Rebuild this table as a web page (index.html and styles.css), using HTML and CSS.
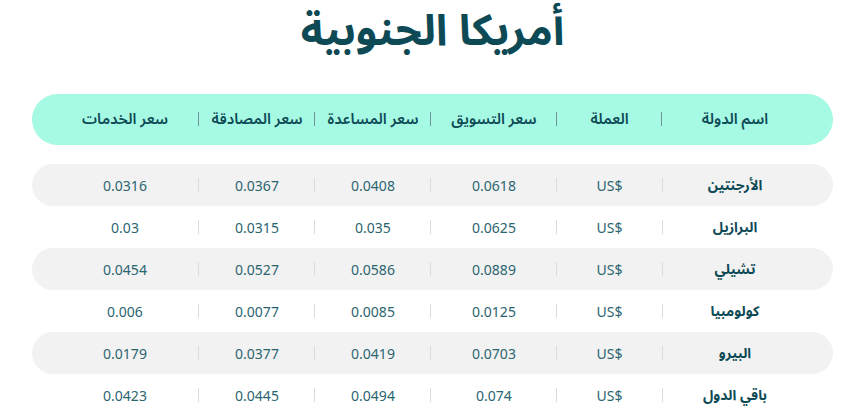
FILE: index.html
```html
<!DOCTYPE html>
<html lang="ar" dir="rtl">
<head>
  <meta charset="UTF-8" />
  <meta name="viewport" content="width=device-width, initial-scale=1.0" />
  <title>أمريكا الجنوبية</title>
  <link rel="stylesheet" href="styles.css">
</head>
<body>
<div class="container">
  <h1 class="title">أمريكا الجنوبية</h1>

  <div class="table">
    <div class="row head">
      <div class="cell">اسم الدولة</div>
      <div class="cell">العملة</div>
      <div class="cell">سعر التسويق</div>
      <div class="cell">سعر المساعدة</div>
      <div class="cell">سعر المصادقة</div>
      <div class="cell">سعر الخدمات</div>
    </div>

    <div class="row gray">
      <div class="cell name">الأرجنتين</div>
      <div class="cell cur">US$</div>
      <div class="cell">0.0618</div>
      <div class="cell">0.0408</div>
      <div class="cell">0.0367</div>
      <div class="cell">0.0316</div>
    </div>
    <div class="row">
      <div class="cell name">البرازيل</div>
      <div class="cell cur">US$</div>
      <div class="cell">0.0625</div>
      <div class="cell">0.035</div>
      <div class="cell">0.0315</div>
      <div class="cell">0.03</div>
    </div>
    <div class="row gray">
      <div class="cell name">تشيلي</div>
      <div class="cell cur">US$</div>
      <div class="cell">0.0889</div>
      <div class="cell">0.0586</div>
      <div class="cell">0.0527</div>
      <div class="cell">0.0454</div>
    </div>
    <div class="row">
      <div class="cell name">كولومبيا</div>
      <div class="cell cur">US$</div>
      <div class="cell">0.0125</div>
      <div class="cell">0.0085</div>
      <div class="cell">0.0077</div>
      <div class="cell">0.006</div>
    </div>
    <div class="row gray">
      <div class="cell name">البيرو</div>
      <div class="cell cur">US$</div>
      <div class="cell">0.0703</div>
      <div class="cell">0.0419</div>
      <div class="cell">0.0377</div>
      <div class="cell">0.0179</div>
    </div>
    <div class="row">
      <div class="cell name">باقي الدول</div>
      <div class="cell cur">US$</div>
      <div class="cell">0.074</div>
      <div class="cell">0.0494</div>
      <div class="cell">0.0445</div>
      <div class="cell">0.0423</div>
    </div>
  </div>
</div>
</body>
</html>
```

FILE: styles.css
```css
body {
  margin: 0;
  background: #fff;
  font-family: 'Noto Sans', 'Noto Sans Arabic', 'DejaVu Sans', sans-serif;
  color: #0d4a55;
}

.container {
  width: 801px;
  margin: 0 10px 0 32px;
}

.title {
  margin: 0;
  height: 94px;
  text-align: center;
  font-size: 43px;
  font-weight: 700;
  line-height: 58px;
  color: #0d4a55;
}

.row {
  display: grid;
  grid-template-columns: 146px 105px 126px 116px 116px 148px;
  align-items: center;
  height: 42px;
  padding: 0 25px 0 19px;
  border-radius: 21px;
  font-size: 14px;
  color: #2b6570;
}

.row.head {
  height: 51px;
  border-radius: 26px;
  background: #a6f9e3;
  margin-bottom: 19px;
  padding-bottom: 1px;
  box-sizing: border-box;
  font-size: 15px;
  font-weight: 600;
  color: #0d4a55;
}

.row.gray {
  background: #f2f2f2;
}

.cell {
  position: relative;
  text-align: center;
}

.cur {
  direction: ltr;
}

.cell + .cell::before {
  content: "";
  position: absolute;
  right: 0;
  top: 50%;
  width: 1px;
  height: 14px;
  margin-top: -7px;
  background: #d9dcdc;
}

.cur::before {
  right: auto;
  left: 105px;
}

.head .cell + .cell::before {
  background: #6f9398;
}

.name {
  font-size: 14px;
  font-weight: 700;
  color: #0d4a55;
}
```
